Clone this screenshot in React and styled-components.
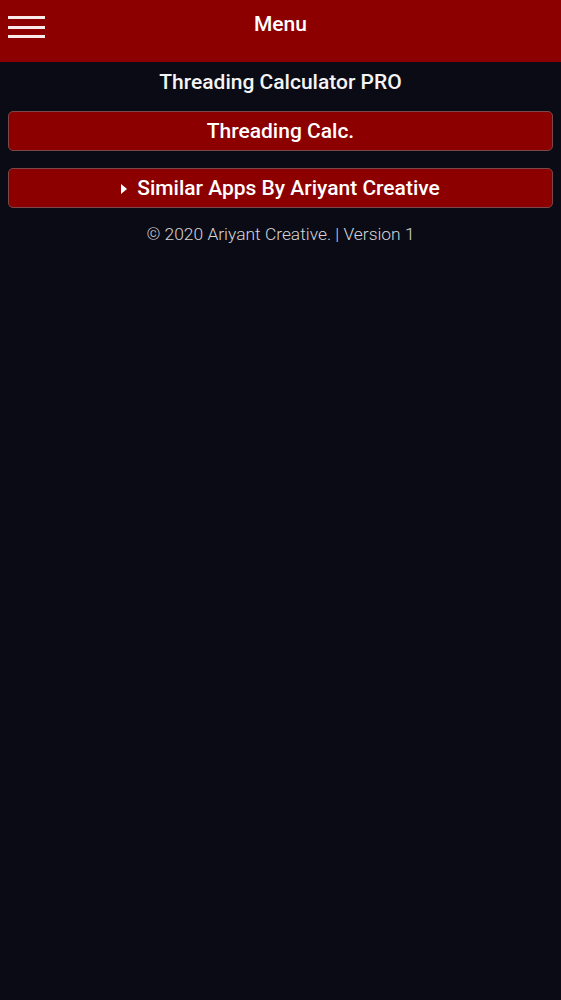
import React from 'react';
import styled, { createGlobalStyle } from 'styled-components';

const GlobalStyle = createGlobalStyle`
  html, body {
    margin: 0;
    padding: 0;
    background-color: #0b0b16;
    font-family: Roboto, 'Liberation Sans', sans-serif;
  }
  * {
    box-sizing: border-box;
  }
`;

const Page = styled.div`
  min-height: 1000px;
  background-color: #0b0b16;
  color: #ffffff;
`;

const Header = styled.header`
  position: relative;
  height: 62px;
  background-color: #8c0000;
  display: flex;
  justify-content: center;
`;

const MenuIcon = styled.button`
  position: absolute;
  left: 8px;
  top: 16px;
  width: 37px;
  height: 22px;
  padding: 0;
  border: none;
  background: none;
  display: flex;
  flex-direction: column;
  justify-content: space-between;
  cursor: pointer;

  > span {
    display: block;
    height: 3px;
    width: 100%;
    background-color: #fbe9e9;
  }
`;

const HeaderTitle = styled.h1`
  margin: 0;
  padding-top: 10px;
  font-size: 21px;
  line-height: 28px;
  font-weight: 500;
  color: #ffffff;
`;

const Content = styled.main`
  padding: 6px 8px 0;
  display: flex;
  flex-direction: column;
  align-items: stretch;
`;

const AppTitle = styled.h2`
  margin: 0;
  text-align: center;
  font-size: 21px;
  line-height: 28px;
  font-weight: 500;
  color: #f4f4f4;
`;

const MenuButton = styled.button`
  margin-top: ${({ $gap }) => $gap}px;
  height: 40px;
  width: 100%;
  border: 1px solid #7a4848;
  border-radius: 5px;
  background-color: #8c0000;
  color: #ffffff;
  font-family: Roboto, 'Liberation Sans', sans-serif;
  font-size: 21px;
  font-weight: 500;
  display: flex;
  align-items: center;
  justify-content: center;
  gap: 10px;
  cursor: pointer;
`;

const Caret = styled.span`
  width: 0;
  height: 0;
  border-top: 5px solid transparent;
  border-bottom: 5px solid transparent;
  border-left: 6px solid #ffffff;
  margin-top: 1px;
`;

const Footer = styled.p`
  margin: 15px 0 0;
  text-align: center;
  font-size: 17.4px;
  line-height: 22px;
  font-weight: 300;
  color: #d6d6d6;
`;

const App = () => {
  return (
    <>
      <GlobalStyle />
      <Page>
        <Header>
          <MenuIcon aria-label="menu">
            <span />
            <span />
            <span />
          </MenuIcon>
          <HeaderTitle>Menu</HeaderTitle>
        </Header>
        <Content>
          <AppTitle>Threading Calculator PRO</AppTitle>
          <MenuButton $gap={15}>Threading Calc.</MenuButton>
          <MenuButton $gap={17}>
            <Caret />
            Similar Apps By Ariyant Creative
          </MenuButton>
          <Footer>© 2020 Ariyant Creative. | Version 1</Footer>
        </Content>
      </Page>
    </>
  );
};

export default App;
